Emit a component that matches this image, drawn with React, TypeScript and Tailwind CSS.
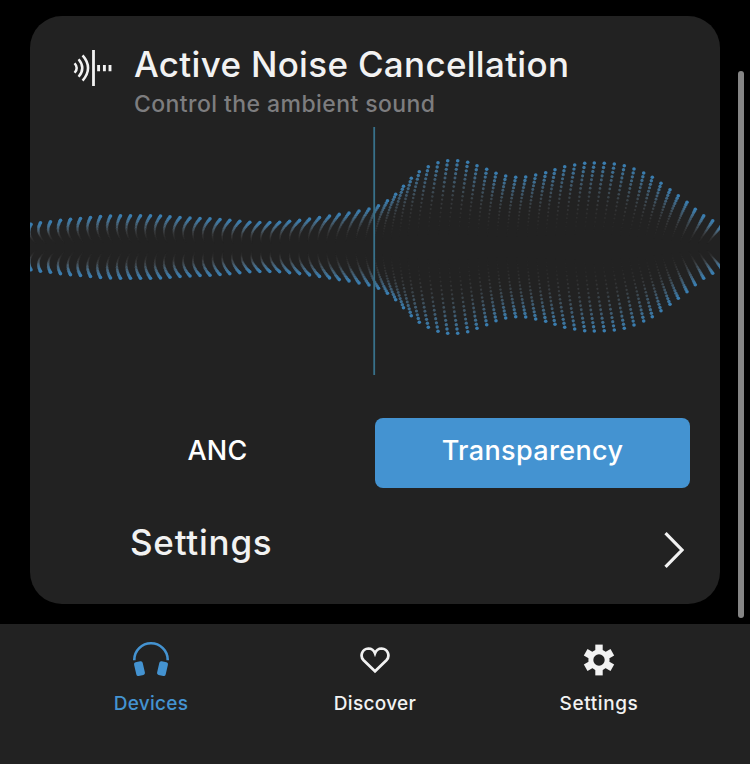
import React from "react";

// Upper end of every wave column: [x, half height].
const TIPS: [number, number][] = [
  [31, 22.8], [40.5, 24.3], [50.5, 25.3], [60.5, 26.8], [70.5, 27.8], [80.5, 28.5], [90.5, 29.5], [100.5, 30.5],
  [110.5, 31], [120.5, 31.3], [130.5, 31.3], [140.5, 31.3], [150.5, 31.3], [160.5, 31], [170, 30.3], [180, 29.5],
  [190, 29], [200, 28.5], [210, 28.2], [220, 27.5], [229.8, 26.7], [239.8, 25.8], [249.8, 24.8], [259.8, 24.5],
  [269.8, 24.5], [279.6, 24.8], [289.6, 25.8], [299.6, 26.6], [309.5, 27.9], [319.5, 29.4], [329.5, 30.9],
  [339.2, 32.6], [349, 33.9], [359, 36], [369, 38], [378.5, 41.3], [387.5, 46.3], [395.7, 52.7],
  [403.5, 60.7], [411.3, 68.7], [419.3, 75.3], [428.3, 80.3], [438, 84.3], [447.7, 86.3], [457.7, 86.3],
  [467.7, 84.7], [477, 81.3], [486.7, 77.7], [496, 73.7], [505.7, 71], [515.7, 69.7], [525.7, 70],
  [535.7, 72], [545.7, 74.3], [555, 77.3], [564.7, 80.3], [574.7, 82], [584.7, 83.7], [594.3, 84],
  [604.3, 83.7], [614.3, 83], [624.3, 81.3], [634, 78], [643.7, 74], [652.3, 69.7], [661, 63.7],
  [670, 57.3], [678.3, 51.3], [687, 44.7], [695.3, 37.7], [703.7, 31.3], [712.7, 26.3], [721.7, 21.5],
];

// Sideways bend of the columns: [x, shift at 35% inwards, shift at 70% inwards].
const BEND: [number, number, number][] = [
  [30, -1.5, 2], [40, -2, 2], [80, -3, 0], [120, -3.5, -1], [150, -5, -4], [190, -6.2, -6],
  [230, -6.3, -7.5], [300, -7.5, -10], [350, -8, -12.5], [395, -7.5, -12], [447, -4.5, -8],
  [535, -4.7, -7.7], [594, -4.7, -8.5], [643, -6, -12], [678, -7.7, -14], [704, -6, -12], [730, -6, -12],
];

function bendAt(x: number): [number, number] {
  let i = 0;
  while (i < BEND.length - 2 && BEND[i + 1][0] < x) i++;
  const a = BEND[i];
  const b = BEND[i + 1];
  const f = (x - a[0]) / (b[0] - a[0]);
  return [a[1] + (b[1] - a[1]) * f, a[2] + (b[2] - a[2]) * f];
}

const STEPS = 20;

function Wave() {
  const dots: React.ReactNode[] = [];
  TIPS.forEach(([x, h], c) => {
    const [d1, d2] = bendAt(x);
    const q = (d2 / 0.7 - d1 / 0.35) / 0.35;
    const p = d1 / 0.35 - q * 0.35;
    for (let k = 3; k <= STEPS; k++) {
      const t = k / STEPS;
      const s = 1 - t;
      const cx = x - 30 + p * s + q * s * s;
      const m = Math.max(0, (t - 0.4) / 0.6);
      const r = 0.75 + 1.05 * Math.pow(t, 1.6);
      const fill = `rgb(${Math.round(120 - 62 * m)},${Math.round(120 + 5 * m)},${Math.round(120 + 55 * m)})`;
      const o = Math.min(1, Math.pow(Math.max(0, t - 0.1) / 0.9, 1.7));
      dots.push(
        <circle key={`${c}-${k}-u`} cx={cx} cy={121 - h * t} r={r} fill={fill} opacity={o} />,
        <circle key={`${c}-${k}-d`} cx={cx} cy={121 + h * t} r={r} fill={fill} opacity={o} />,
      );
    }
  });
  return (
    <svg width="690" height="250" viewBox="0 0 690 250" className="block">
      {dots}
      <rect x="343.3" y="1" width="1.8" height="248" fill="#38718a" />
    </svg>
  );
}

function NoiseIcon() {
  return (
    <svg width="42" height="38" viewBox="0 0 42 38" fill="none" stroke="#f2f2f2" strokeWidth="2.5">
      <path d="M2.6 14.2Q6.8 19 2.6 23.8" />
      <path d="M6.6 10.2Q14 19 6.6 27.8" />
      <path d="M10.6 6.4Q21.5 19 10.6 31.6" />
      <path d="M21.5 1V37" strokeWidth="2.8" />
      <path d="M26.6 16v6.2M32.4 16v6.2M38 16v6.2" strokeWidth="2.9" />
    </svg>
  );
}

function HeadphonesIcon() {
  return (
    <svg width="38" height="38" viewBox="0 0 38 38">
      <path d="M2.3 19.2V18.8a16.7 16.5 0 0 1 33.4 0V19.2" fill="none" stroke="#4493d1" strokeWidth="2.6" />
      <rect x="3.1" y="20.6" width="8.8" height="14" rx="2" fill="#4493d1" transform="rotate(-13 7.5 27.6)" />
      <rect x="26.1" y="20.6" width="8.8" height="14" rx="2" fill="#4493d1" transform="rotate(13 30.5 27.6)" />
    </svg>
  );
}

function HeartIcon() {
  return (
    <svg width="32" height="28" viewBox="0 0 32 28" fill="none" stroke="#f2f2f2" strokeWidth="2.7">
      <path d="M16 25.3 4.6 14.2A6.9 6.9 0 0 1 9.3 2.5C12.6 2.5 14.9 4.3 16 7.3 17.1 4.3 19.4 2.5 22.7 2.5A6.9 6.9 0 0 1 27.4 14.2Z" />
    </svg>
  );
}

function GearIcon() {
  return (
    <svg width="32" height="32" viewBox="-16 -16 32 32" fill="#f2f2f2">
      {[0, 60, 120].map((a) => (
        <rect key={a} x="-3.7" y="-15.4" width="7.4" height="30.8" transform={`rotate(${a})`} />
      ))}
      <circle r="8.1" fill="none" stroke="#f2f2f2" strokeWidth="5" />
      <circle r="5.7" fill="#222" />
    </svg>
  );
}

export default function App() {
  return (
    <div className="relative flex h-[764px] w-[750px] flex-col overflow-hidden bg-black pt-4 font-['Inter','Liberation_Sans',sans-serif] font-medium text-[#f2f2f2]">
      <main className="mx-[30px] flex h-[588px] flex-col overflow-hidden rounded-[32px] bg-[#222]">
        <header className="flex h-[110px] pl-[42px] pt-7">
          <div className="mt-[5px] w-[62px] shrink-0"><NoiseIcon /></div>
          <div className="whitespace-nowrap">
            <h1 className="text-[35px] leading-10 tracking-[0.3px]">Active Noise Cancellation</h1>
            <p className="mt-[6px] text-[23px] leading-7 tracking-[0.42px] text-[#7d7d7f]">Control the ambient sound</p>
          </div>
        </header>
        <Wave />
        <div className="mx-[30px] mt-[42px] grid h-[70px] grid-cols-2 text-[27px] text-white">
          <button className="pb-1 leading-8 tracking-[0.2px]">ANC</button>
          <button className="rounded-lg bg-[#4493d1] pb-1 leading-8 tracking-[0.35px]">Transparency</button>
        </div>
        <div className="mt-[34px] flex justify-between pl-[100px] pr-[34px]">
          <span className="text-[35px] leading-10 tracking-[0.75px]">Settings</span>
          <svg width="24" height="40" viewBox="0 0 24 40" fill="none" stroke="#f2f2f2" strokeWidth="3.2" className="mt-2">
            <path d="M3.5 3.2 20 20 3.5 36.8" />
          </svg>
        </div>
      </main>
      <nav className="mt-5 flex h-[140px] justify-center bg-[#222] text-[19px] leading-6">
        <div className="flex w-56 flex-col items-center pt-[17px] text-[#4493d1]">
          <div className="flex h-[38px] items-center"><HeadphonesIcon /></div>
          <span className="mt-[13px] tracking-[0.25px]">Devices</span>
        </div>
        <div className="flex w-56 flex-col items-center pt-[17px]">
          <div className="flex h-[38px] items-center"><HeartIcon /></div>
          <span className="mt-[13px] tracking-[0.3px]">Discover</span>
        </div>
        <div className="flex w-56 flex-col items-center pt-[17px]">
          <div className="flex h-[38px] items-center"><GearIcon /></div>
          <span className="mt-[13px] tracking-[0.6px]">Settings</span>
        </div>
      </nav>
      <div className="absolute left-[738px] top-[71px] h-[547px] w-[6px] rounded-full bg-[#858585]" />
    </div>
  );
}
